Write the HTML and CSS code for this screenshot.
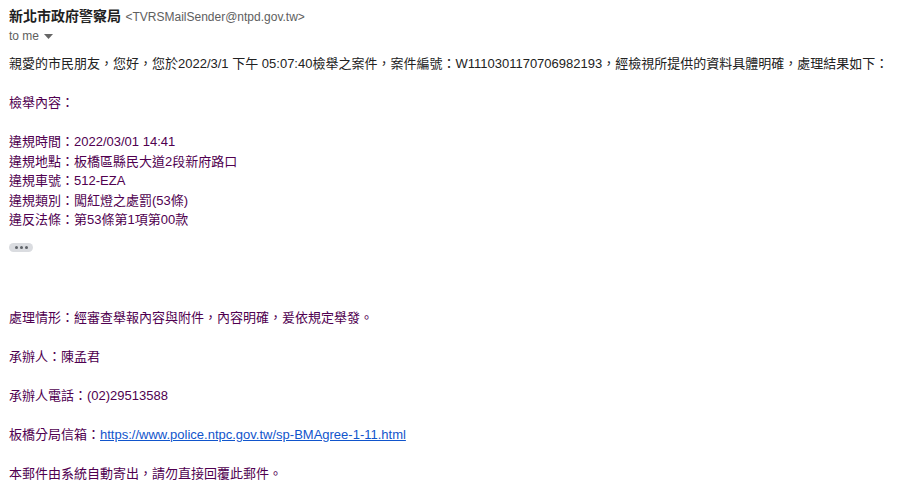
FILE: index.html
```html
<!DOCTYPE html>
<html lang="zh-Hant">
<head>
<meta charset="utf-8">
<link rel="stylesheet" href="styles.css">
</head>
<body>
<div class="mail">
  <div class="header">
    <div class="from"><span class="name">新北市政府警察局</span> <span class="addr">&lt;TVRSMailSender@ntpd.gov.tw&gt;</span></div>
    <div class="to">to me <svg class="caret" width="9" height="5" viewBox="0 0 9 5"><path d="M0 0h9L4.5 5z" fill="#666"/></svg></div>
  </div>
  <div class="body">
    <div class="intro">親愛的市民朋友，您好，您於2022/3/1 下午 05:07:40檢舉之案件，案件編號：W1110301170706982193，經檢視所提供的資料具體明確，處理結果如下：</div>
    <div class="quoted">
      <div class="blank"></div>
      <div>檢舉內容：</div>
      <div class="blank"></div>
      <div>違規時間：2022/03/01 14:41</div>
      <div>違規地點：板橋區縣民大道2段新府路口</div>
      <div>違規車號：512-EZA</div>
      <div>違規類別：闖紅燈之處罰(53條)</div>
      <div>違反法條：第53條第1項第00款</div>
    </div>
    <div class="more"><span class="dot"></span><span class="dot"></span><span class="dot"></span></div>
    <div class="quoted rest">
      <div>處理情形：經審查舉報內容與附件，內容明確，爰依規定舉發。</div>
      <div class="blank"></div>
      <div>承辦人：陳孟君</div>
      <div class="blank"></div>
      <div>承辦人電話：(02)29513588</div>
      <div class="blank"></div>
      <div>板橋分局信箱：<a class="link" href="#">https://www.police.ntpc.gov.tw/sp-BMAgree-1-11.html</a></div>
      <div class="blank"></div>
      <div>本郵件由系統自動寄出，請勿直接回覆此郵件。</div>
    </div>
  </div>
</div>
</body>
</html>
```
FILE: styles.css
```css
html, body {
  margin: 0;
  padding: 0;
  background: #ffffff;
}
body {
  font-family: "Liberation Sans", Arial, "Noto Sans CJK TC", sans-serif;
  color: #222222;
}
.mail {
  padding: 6px 9px 0 9px;
}
.header {
  display: flex;
  flex-direction: column;
}
.from {
  line-height: 20px;
  white-space: nowrap;
}
.name {
  font-size: 14px;
  font-weight: bold;
  color: #1f1f1f;
}
.addr {
  font-size: 12px;
  color: #5e5e5e;
}
.to {
  font-size: 12px;
  color: #5e5e5e;
  line-height: 18px;
  display: flex;
  align-items: center;
  gap: 5px;
}
.caret {
  display: block;
  margin-top: 1px;
}
.body {
  margin-top: 9px;
  font-size: 13px;
  line-height: 19.5px;
}
.intro {
  color: #222222;
  white-space: nowrap;
}
.quoted {
  color: #500050;
}
.blank {
  height: 19.5px;
}
.more {
  margin-top: 13px;
  width: 24px;
  height: 9px;
  border-radius: 5px;
  background: #dadce0;
  display: flex;
  align-items: center;
  justify-content: center;
  gap: 2px;
}
.dot {
  width: 3px;
  height: 3px;
  border-radius: 50%;
  background: #5f6368;
}
.rest {
  margin-top: 56px;
}
.link {
  color: #1155cc;
  text-decoration: underline;
}
```
